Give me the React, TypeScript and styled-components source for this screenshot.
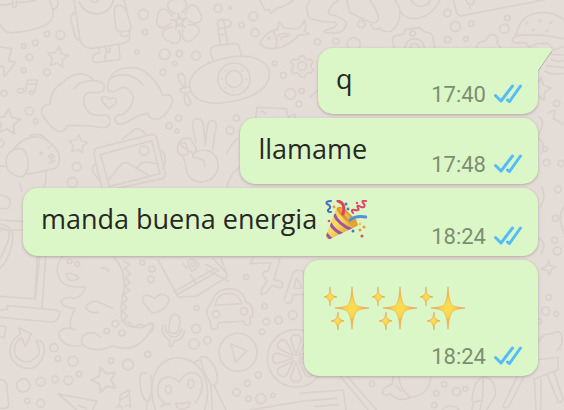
import React from "react";
import styled, { createGlobalStyle, css } from "styled-components";

const GlobalStyle = createGlobalStyle`
  * { box-sizing: border-box; }
  body { margin: 0; background: #e4dcd6; }
`;

const Chat = styled.main`
  position: relative;
  min-height: 100vh;
  padding: 48px 26px 34px 16px;
  overflow: hidden;
  font-family: "Open Sans", sans-serif;
`;

const Wallpaper = styled.svg`
  position: absolute;
  inset: 0;
  width: 100%;
  height: 100%;
  fill: none;
  stroke: #dad1cb;
  stroke-width: 5;
  stroke-linecap: round;
  stroke-linejoin: round;
`;

const Messages = styled.ol`
  position: relative;
  display: flex;
  flex-direction: column;
  align-items: flex-end;
  gap: 4px;
  margin: 0;
  padding: 0;
  list-style: none;
`;

const Bubble = styled.li<{ $stacked?: boolean; $tail?: boolean }>`
  position: relative;
  display: flex;
  justify-content: space-between;
  column-gap: 64px;
  min-width: 220px;
  padding: 12px 16px 6px 18px;
  border-radius: 15px;
  background: #dcf7c7;
  box-shadow: 0 1px 3px rgba(60, 50, 40, 0.3);
  ${(p) => p.$tail && css`border-top-right-radius: 0;`}
  ${(p) =>
    p.$stacked &&
    css`
      flex-direction: column;
      min-width: 234px;
    `}
`;

const Tail = styled.svg`
  position: absolute;
  top: 0;
  left: 100%;
  width: 15px;
  height: 24px;
`;

const Text = styled.p`
  display: flex;
  gap: 8px;
  margin: 0;
  padding-bottom: 10px;
  color: #262826;
  font-size: 27px;
  line-height: 38px;
`;

const EmojiRow = styled.div`
  display: flex;
  align-items: center;
  height: 72px;
`;

const Meta = styled.div`
  display: flex;
  align-self: flex-end;
  align-items: center;
  gap: 8px;
  color: #7c8e72;
  font-family: Roboto, sans-serif;
  font-size: 22px;
  line-height: 26px;
`;

const Ticks = styled.svg`
  width: 28px;
  height: 20px;
  margin-bottom: 2px;
  fill: none;
  stroke: #53bdf7;
  stroke-width: 3;
  stroke-linecap: round;
  stroke-linejoin: round;
`;

const PartyIcon = styled.svg`
  flex: none;
  width: 42px;
  height: 40px;
`;

const SparkleIcon = styled.svg`
  width: 48px;
  height: 46px;
`;

const Star = ({ x, y, r = 0, s = 1 }: { x: number; y: number; r?: number; s?: number }) => (
  <path
    transform={`translate(${x} ${y}) rotate(${r}) scale(${s})`}
    d="M0-33 10-12 33-9 16 7 20 30 0 19-20 30-16 7-33-9-10-12Z"
  />
);

const dots: [number, number, number][] = [
  [141,102,8],[181,105,13],[106,128,8],[71,138,7],[88,172,10],[71,211,7],[141,217,10],[12,280,9],[88,333,12],[107,364,7],
  [0,430,12],[230,500,13],[217,547,15],[430,43,15],[435,96,8],[411,155,6],[494,163,16],[538,161,9],[524,191,6],[489,217,9],
  [536,354,9],[507,377,9],[531,393,6],[588,167,13],[654,25,12],[690,23,4],[760,49,13],[725,75,8],[765,98,12],[824,190,7],
  [850,226,9],[871,282,16],[905,273,8],[897,312,9],[709,354,9],[690,391,12],[952,126,9],[1342,39,11],[1366,80,15],[1414,71,8],
  [1343,119,9],[1398,117,7],[1522,54,8],[1513,86,14],[1008,124,9],[1061,133,20],[1084,72,11],[1670,310,9],
  [1640,488,10],[1635,447,7],[1683,490,9],[1666,655,9],[1664,721,9],[1672,753,12],[1674,568,10],
  [209,784,7],[232,792,7],[427,788,7],[456,807,9],[453,838,10],[346,971,10],[320,993,8],[366,999,9],[162,1043,12],[174,1076,8],
  [219,1084,15],[237,1122,8],[205,1141,13],[165,1138,10],[122,1145,13],[70,1156,20],[82,1202,8],[122,1210,12],[333,1082,8],
  [384,1094,16],[443,1063,9],[739,831,7],[590,924,7],[588,986,13],[582,1032,15],[622,1021,11],[794,919,8],[799,965,10],
  [836,961,11],[878,945,13],[786,995,8],[775,1125,9],[742,1150,9],[710,1177,11],[782,1196,15],[819,1186,6],[746,1196,8],
  [1646,892,8],[1637,933,12],[1669,942,7],[1617,964,7],[1116,1151,8],[1309,1180,8],[1333,1153,8],[1369,1175,12],[1396,1166,7],[1303,1216,8],
];

const Doodles = () => (
  <Wallpaper viewBox="0 0 1692 1230" preserveAspectRatio="xMinYMin slice" aria-hidden="true">
    {dots.map(([x, y, r], i) => (
      <circle key={i} cx={x} cy={y} r={r} />
    ))}
    {/* basket, robot */}
    <path d="M0 72Q12 103 42 98 90 94 133 77 165 60 158 30L150 0M0 14Q22 16 40 8M48 8Q90 6 108 0M38 0V20Q44 26 49 18V0M158 30Q180 20 172 0" />
    <path d="M222 0 240 120Q250 148 280 145L370 130Q390 126 389 108M372 0 380 28M238 5Q252 42 294 42 333 36 340 0M270 0Q285 14 296 0M228 38Q210 40 213 62L224 105Q230 122 243 120M342 36Q344 14 360 16 376 18 382 42L393 78Q394 92 380 93L358 95Q349 94 347 80ZM361 95Q360 110 374 110 391 109 389 94" />
    <path d="M298 142 298 158Q276 162 277 180 280 189 296 187L350 180Q362 180 360 170L356 135M315 142Q322 148 319 158 310 172 318 180M330 140V155L319 158" />
    {/* flower */}
    <g transform="translate(538 64)">
      {[0, 72, 144, 216, 288].map((a) => (
        <path key={a} transform={`rotate(${a - 8})`} d="M-11-25C-45-52-20-72 0-66 24-73 43-50 11-25M0-8V-25" />
      ))}
      <path d="M0-17 5-6 17-5 8 4 11 17 0 10-11 17-8 4-17-5-5-6Z" />
    </g>
    {/* bolt, stars, notes */}
    <path d="M0 141 35 146 25 182 47 187 13 230 10 200 0 199M76 275 83 240 113 240 102 277M80 252 108 252M52 273Q53 264 68 266 76 272 66 278 53 281 52 273M86 278Q90 269 104 276 103 284 91 283Z" />
    <Star x={173} y={171} r={8} s={0.95} />
    <Star x={234} y={432} r={5} s={0.85} />
    <Star x={23} y={365} r={5} s={1.15} />
    <Star x={313} y={1138} r={-18} s={1.15} />
    <Star x={1618} y={267} r={10} s={1.05} />
    <Star x={1582} y={232} r={10} s={0.8} />
    {/* hands forming a heart */}
    <path d="M150 312Q152 267 190 246 216 218 251 222 272 229 282 242 316 245 313 266 309 281 267 277 249 281 252 310 260 345 293 346L319 345Q333 352 329 370 323 385 303 382 258 374 202 377 197 397 175 394 147 382 126 342 119 318 150 312M222 266Q240 239 282 243" />
    <path d="M326 246Q338 208 377 204 421 198 446 225 475 248 487 286 520 278 517 307 505 344 475 357 443 360 445 340 413 343 383 366 349 383 344 357 346 344 370 343 398 322 400 292 390 262 368 262L339 275Q315 277 326 246ZM334 233Q387 207 429 254M327 325C279 284 322 285 328 298 341 284 370 303 327 325Z" />
    {/* puppy, picture */}
    <path d="M36 454Q69 407 112 411 154 418 176 459 184 490 166 505L82 523M30 455Q10 480 24 510 43 532 70 530 93 504 80 465 72 439 45 448ZM90 407Q115 397 135 413L147 427M0 498 18 499M137 515Q142 547 127 570M146 469 158 462 162 472 152 476ZM154 477 156 487 148 490M157 486 165 481M146 443 155 437" />
    <circle cx="124" cy="460" r="4" />
    <path d="M282 461Q280 447 292 444L455 403Q467 402 470 414L496 520Q497 533 485 536L335 569M308 570Q291 514 282 461M302 464 455 422 480 521 328 560ZM325 540 367 490Q380 483 395 496L444 525M411 507Q418 487 439 486L474 492M368 417 400 391Q418 379 436 402M485 450Q506 478 488 505M290 493Q273 493 279 516L302 545" />
    <circle cx="432" cy="452" r="14" />
    {/* submarine, fish, gear */}
    <path d="M568 250Q581 195 673 175 762 155 801 197 819 230 791 263 751 301 665 309 571 315 568 250ZM640 184 631 153Q630 142 650 137L705 130Q719 132 720 148L724 166M661 136 652 70Q653 59 665 58L687 60Q698 68 690 79L675 83 683 132M655 86 675 84M658 105 678 102M670 60 675 83M567 260 542 266Q538 275 550 279L568 276M555 264Q530 239 535 226 545 212 554 230 558 246 555 264M555 278Q548 302 562 317 576 319 570 298Z" />
    <circle cx="702" cy="237" r="48" /><circle cx="702" cy="237" r="25" />
    <circle cx="702" cy="237" r="36" strokeDasharray="1 27" />
    <path d="M780 130Q795 95 832 88L838 66 852 84 884 87Q903 88 914 60 921 84 912 92L929 102 896 106Q865 138 833 144 793 151 780 130ZM821 96Q836 122 827 143M835 108Q844 96 866 103 864 112 849 109L842 117" />
    <circle cx="807" cy="115" r="3" />
    <circle cx="906" cy="198" r="13" />
    <path d="M900 168 912 167 915 177 924 181 933 177 939 187 932 195 934 203 940 209 934 220 925 217 917 223 914 231 902 231 898 223 889 218 880 222 873 211 880 203 879 194 872 187 878 177 888 180 897 176Z" />
    {/* peace hand, plane, camera */}
    <path d="M588 428 577 376Q578 352 599 357 610 362 611 383L616 434 622 380Q625 357 645 363 653 370 644 404L638 450M614 451Q590 449 578 464 575 475 592 474L611 481 615 499M578 459Q533 433 538 425 552 409 572 417L588 444Q589 460 580 464M533 455Q530 426 544 427L558 430 564 460Q545 475 533 455M550 470 562 520Q575 548 610 546 652 538 655 494 648 452 614 451" />
    <path d="M767 353 771 322 858 326 865 353M784 335Q790 330 796 342M865 350 885 342V354M680 460Q690 440 710 416M720 500Q681 532 681 570M930 292 954 270" />
    {/* monster, envelope */}
    <path d="M780 0 795 30 809 28 812 40 830 25Q858 19 880 0M930 0Q913 24 928 54 960 67 1005 66 1022 80 978 90 963 101 999 98 1033 102 1040 70 1028 50 985 42 986 18 1015 0M1040 0 1050 38 1114 68Q1110 94 1140 85 1146 97 1173 94 1205 70 1199 24L1185 0M1110 0Q1130 28 1136 55 1130 73 1118 66M1200 30Q1208 57 1249 56 1297 48 1320 0M1232 0Q1245 18 1263 20 1285 16 1292 0" />
    <path d="M1360 0 1370 38Q1376 51 1391 46L1692 -12M1398 0Q1400 12 1414 14 1426 9 1422 0M1410 14V26" />
    <path d="M1182 143 1177 119Q1178 107 1194 106L1210 102 1217 88 1259 83 1273 96Q1300 98 1299 115L1304 143M1215 143Q1218 118 1244 116 1271 119 1273 143M1230 143Q1233 131 1244 130 1256 132 1258 143" />
    <circle cx="1238" cy="100" r="8" />
    <path d="M1430 143Q1431 123 1457 123 1465 99 1485 105 1498 116 1490 128L1502 144M1547 108Q1558 58 1594 43 1650 26 1692 60M1538 116 1550 106Q1630 101 1692 117M1538 116Q1532 127 1552 129L1578 128 1588 141 1610 131 1644 130 1660 150 1690 140M1578 71 1583 66M1616 65 1623 60M1649 69 1656 65M1598 92 1604 88M1638 94 1645 89M1655 178Q1670 188 1692 181M1640 197 1692 203M1634 213Q1652 226 1692 220M1618 162 1692 165" />
    <path d="M1618 350Q1640 370 1610 410 1640 430 1625 460M1690 372 1660 356 1665 330 1645 338M0 585 20 590Q40 600 24 626H0M0 660 75 665M0 690 74 690M60 550 65 575M1625 560Q1640 590 1622 620M1692 620Q1670 650 1692 700M1610 710Q1645 730 1623 760" />
    {/* laptop and refresh arrow */}
    <path d="M0 672Q50 678 35 735 26 780 0 805M0 684Q45 684 18 737 5 770 0 775M112 770 105 887Q104 896 96 896L0 889M119 770 106 898M137 770 126 926M0 930 23 927V917L170 930Q183 936 177 949 169 967 152 966L0 952M0 977 18 980 13 1013 0 1011" />
    <path d="M56 983 94 1001 77 1039 65 1014Q33 1031 48 1070 80 1103 115 1065 122 1042 109 1022M56 983 62 1001Q23 1026 31 1068 54 1112 99 1104 139 1079 132 1039 126 1022 118 1021 112 1019 109 1029M0 1139Q17 1137 20 1155L26 1213Q25 1226 10 1225H0" />
    {/* dinosaur and small heart */}
    <path d="M190 765Q162 800 176 832 189 859 226 861L257 861Q248 888 224 896 198 885 183 904 187 924 226 925 207 954 212 982M226 990Q197 976 177 996 175 1029 217 1038L242 1038M300 1011Q284 993 263 999 240 1009 246 1033 282 1062 338 1038 420 1066 461 973 456 964 426 983 384 986 365 961 360 910 373 866 375 802 341 772M257 925Q262 903 289 904L338 925M295 937Q265 941 257 922M198 822Q215 815 237 833 228 846 207 839 201 832 198 822M305 804Q316 800 325 813" />
    <path d="M371 782 389 793 373 806 392 820 376 835 391 848 374 858 389 872 370 884 383 897 368 909 380 923 366 935 382 948 371 962 389 968Q395 986 412 978 419 966 433 979M457 939C407 892 431 872 465 896 482 868 527 891 497 919Q488 935 457 939ZM450 968Q470 980 450 999" />
    <path d="M175 1182Q190 1195 230 1230M175 1182 290 1203 278 1230M235 1217 260 1225M358 1220 361 1184 387 1170 391 1216M360 1200 386 1186M349 1223Q360 1209 367 1226M375 1220Q386 1209 391 1222" />
    {/* map, letters, car, microphone */}
    <path d="M474 780 535 892 590 888 682 830 663 775M522 875 620 820 650 805M530 884 625 830 657 810M620 809 685 843M548 790Q555 801 562 804M570 823 588 849M616 792 639 805M640 776 680 820M575 814Q557 785 572 778 595 778 596 795 591 807 575 814Z" />
    <circle cx="580" cy="793" r="6" />
    <path d="M758 775 751 791 813 788 804 814Q787 811 790 827L801 842 783 873 785 884 797 880 817 856 836 863Q854 867 845 845L822 838 840 775M852 900 879 819Q891 804 911 815L928 905M855 908 874 908 881 884 910 883M882 864 889 835 903 855 903 865Z" />
    <path d="M629 918 645 885Q667 861 700 867 731 874 737 906 760 909 759 948L750 952 751 970Q745 980 734 973L732 963 655 968 653 983Q642 992 635 984L629 961Q615 940 625 921ZM645 916Q650 884 678 881 717 877 725 911Z" />
    <circle cx="648" cy="943" r="11" /><circle cx="732" cy="934" r="11" />
    <path d="M506 988 511 957Q515 940 530 944 540 948 540 963L536 990Q529 1003 514 999 503 996 506 988ZM487 977Q482 999 500 1014L509 1022 508 1037Q515 1045 519 1034L522 1024Q550 1020 554 991M495 976Q496 1005 517 1011 539 1012 545 988" />
    {/* play button, orange, monkey */}
    <circle cx="714" cy="1057" r="57" />
    <path d="M692 1032 741 1052 707 1087Z" />
    <circle cx="888" cy="1075" r="86" />
    <g transform="translate(888 1075)">
      {[0, 45, 90, 135, 180, 225, 270, 315].map((a) => (
        <path key={a} transform={`rotate(${a})`} d="M0-10-16-58Q-12-72 0-70 12-72 16-58Z" />
      ))}
    </g>
    <path d="M466 1230Q448 1182 461 1130 480 1075 535 1073 586 1078 609 1120 634 1168 614 1230M538 1146Q515 1124 489 1135 470 1146 474 1180 481 1208 508 1215M538 1146Q557 1112 587 1119 608 1130 607 1162 599 1195 585 1208M482 1220Q494 1210 510 1211M527 1210Q548 1213 568 1206 574 1223 547 1228 528 1226 527 1210M600 1075Q605 1065 623 1075 656 1102 652 1146 643 1160 633 1155L612 1115ZM597 1080 585 1085M633 1158 637 1230M643 1158 678 1230M440 1120Q416 1110 420 1150 424 1200 445 1205 460 1180 452 1125M440 1205V1230" />
    <ellipse cx="505" cy="1169" rx="9" ry="13" /><ellipse cx="573" cy="1151" rx="9" ry="13" />
    {/* sparkle, chair, pencil, bird */}
    <path d="M1646 780 1651 797 1668 801 1653 809 1650 826 1641 811 1623 807 1640 798ZM1610 1045Q1616 1000 1657 1001 1678 987 1685 1005 1692 1030 1672 1052M1604 1080 1675 1072 1673 1110 1600 1138M1550 1132 1509 1218Q1513 1230 1526 1220L1570 1133M1603 1137 1608 1230M1623 1137 1622 1230M1642 1125 1675 1207Q1684 1210 1689 1197L1662 1115" />
    <path d="M1010 1115 1105 1230M1025 1110 1130 1230M900 1180 1030 1170 1038 1230M900 1204 1010 1195M945 1220 1015 1214M1180 1130 1176 1153Q1144 1163 1147 1178 1158 1193 1170 1180 1192 1204 1221 1196L1258 1185Q1290 1172 1292 1132M1198 1132Q1196 1164 1228 1190M1188 1157 1202 1173M1416 1202Q1419 1144 1450 1130 1489 1135 1486 1187L1460 1230M1450 1133 1447 1200 1420 1207 1416 1230M1447 1200 1440 1230M1328 1227Q1350 1207 1377 1228M750 1230 900 1205" />
  </Wallpaper>
);

const Party = () => (
  <PartyIcon viewBox="0 0 42 40" role="img" aria-label="🎉">
    <defs>
      <linearGradient id="cone" x1="0" y1="0" x2="1" y2="0.8">
        <stop offset="0" stopColor="#f2b544" />
        <stop offset="0.45" stopColor="#fbdc62" />
        <stop offset="1" stopColor="#d98d26" />
      </linearGradient>
      <clipPath id="coneClip">
        <path d="M12 7Q22 8 32 26L5 39Q1 40 1 36Z" />
      </clipPath>
    </defs>
    <path d="M12 7Q22 8 32 26L5 39Q1 40 1 36Z" fill="url(#cone)" />
    <g clipPath="url(#coneClip)" fill="none" stroke="#9a55a5" strokeWidth="3">
      <path d="M9 14Q13 24 27 30M5 23Q9 31 19 35M1 33Q4 38 8 40" />
    </g>
    <path d="M12 8Q16 4 24 13 34 22 32 26 27 27 19 19 11 11 12 8Z" fill="#d99a30" />
    <path d="M14 8Q20 8 30 24 23 21 14 8Z" fill="#f0b548" />
    <path d="M22 20 31 19 33 25 29 27Z" fill="#e3a336" />
    <g fill="none" strokeLinecap="round" strokeWidth="2">
      <path d="M6 1Q0 1 2 4 7 6 4 9 1 12 6 12" stroke="#426fc2" />
      <path d="M13 1Q21 3 18 14" stroke="#e4405c" strokeWidth="3" />
      <path d="M41 1Q35 0 39 4 41 8 36 7 31 4 33 8 35 11 30 10 25 9 28 13" stroke="#dc4769" />
      <path d="M25 20Q31 15 41 17" stroke="#4f91da" strokeWidth="3" />
    </g>
    <g fill="#4979ba"><circle cx="21" cy="4" r="1.5" /><circle cx="23" cy="9" r="1.4" /><circle cx="28" cy="31" r="1.5" /></g>
    <g fill="#ef994b"><circle cx="35" cy="30" r="1.6" /><circle cx="39" cy="27" r="1.6" /><circle cx="9" cy="7" r="1.4" /></g>
    <g fill="#dc5269"><circle cx="4" cy="21" r="1.3" /><circle cx="32" cy="3" r="1.2" /><circle cx="37" cy="36" r="1.6" /></g>
    <circle cx="35" cy="24" r="1.4" fill="#eace43" />
  </PartyIcon>
);

const Sparkles = () => (
  <SparkleIcon viewBox="0 0 48 46" role="img" aria-label="✨">
    <defs>
      <radialGradient id="glow">
        <stop offset="0" stopColor="#ffe34e" />
        <stop offset="0.4" stopColor="#fcd34f" />
        <stop offset="1" stopColor="#e99543" />
      </radialGradient>
    </defs>
    <g fill="url(#glow)" stroke="#eaa446" strokeWidth="0.6">
      <path d="M30 2Q31 17 34 20 36 22 47 23 36 24 34 27 31 31 30 44 29 31 26 27 24 24 13 23 24 22 26 20 29 17 30 2Z" />
      <path d="M8 2Q8 9 10 10 11 11 15 12 11 12 10 14 8 16 8 21 8 16 6 14 5 12 2 12 5 11 6 10 8 9 8 2Z" />
      <path d="M16 27Q16 33 18 34 19 35 22 36 19 36 18 38 16 39 16 45 15 39 14 38 13 36 9 36 13 35 14 34 15 33 16 27Z" />
    </g>
  </SparkleIcon>
);

const Status = ({ time }: { time: string }) => (
  <Meta>
    <time dateTime={time}>{time}</time>
    <Ticks viewBox="0 0 28 20" role="img" aria-label="Leído">
      <path d="M1.5 11.5 7 17 18.5 2M13.5 16 15.5 17.5 26.5 2" />
    </Ticks>
  </Meta>
);

export default function App() {
  return (
    <>
      <GlobalStyle />
      <Chat>
        <Doodles />
        <Messages>
          <Bubble $tail>
            <Text>q</Text>
            <Status time="17:40" />
            <Tail viewBox="0 0 15 24" aria-hidden="true">
              <path d="M0 0H12Q15 1 13 4L0 23Z" fill="#dcf7c7" />
              <path d="M14 3 0 23" fill="none" stroke="#8b9580" strokeWidth="0.6" />
            </Tail>
          </Bubble>
          <Bubble>
            <Text>llamame</Text>
            <Status time="17:48" />
          </Bubble>
          <Bubble>
            <Text>
              manda buena energia <Party />
            </Text>
            <Status time="18:24" />
          </Bubble>
          <Bubble $stacked>
            <EmojiRow>
              <Sparkles />
              <Sparkles />
              <Sparkles />
            </EmojiRow>
            <Status time="18:24" />
          </Bubble>
        </Messages>
      </Chat>
    </>
  );
}
